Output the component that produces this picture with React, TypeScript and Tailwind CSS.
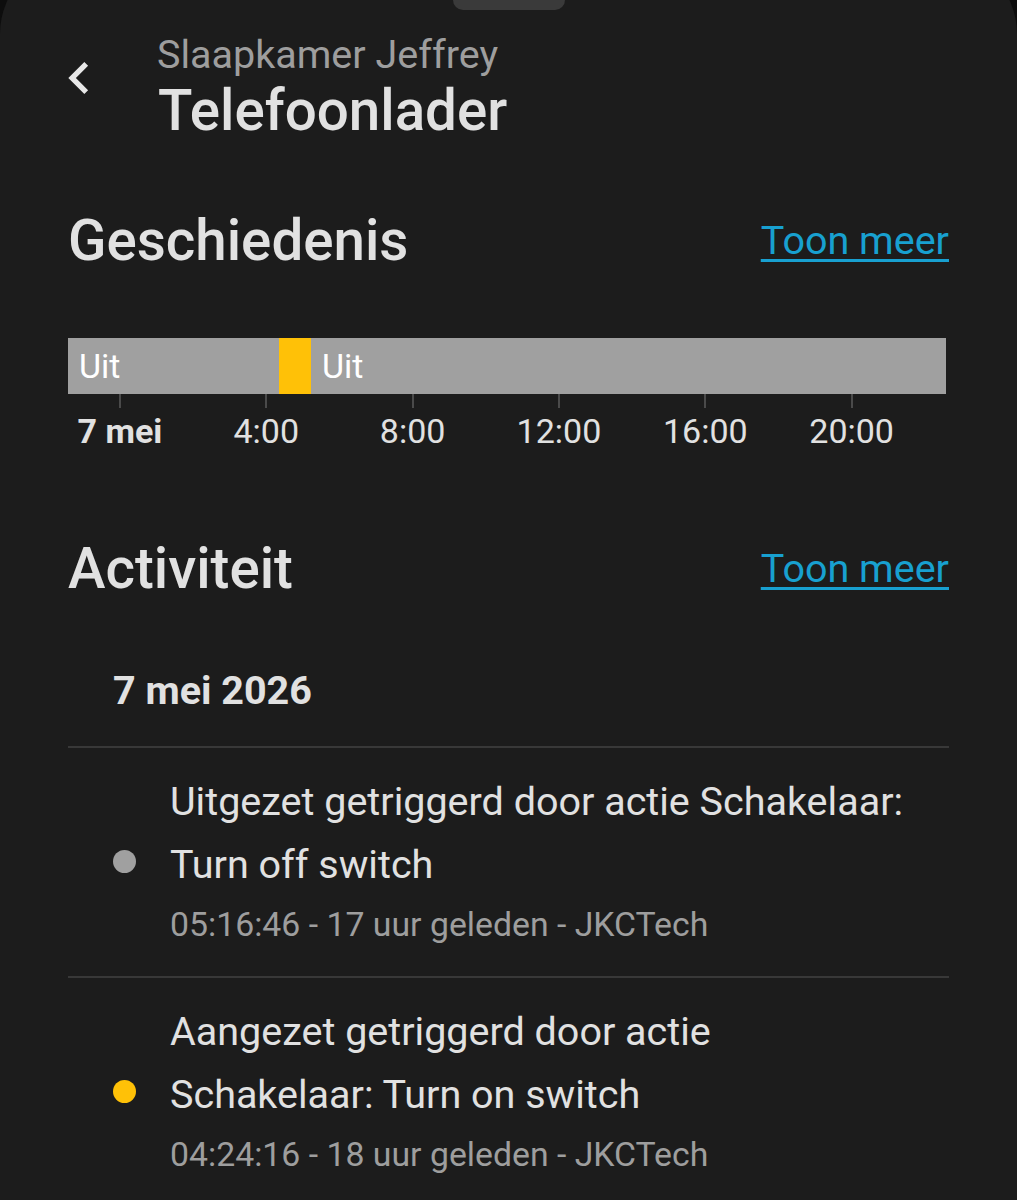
import React from 'react';

type Segment = { label: string; hours: number; on: boolean };

// timeline starts at 22:35 the day before, 24h window
const START_OFFSET = 1.42;
const TOTAL = 24;

const segments: Segment[] = [
  { label: 'Uit', hours: 5.77, on: false },
  { label: '', hours: 0.87, on: true },
  { label: 'Uit', hours: 17.36, on: false },
];

const ticks = [
  { label: '7 mei', bold: true },
  { label: '4:00' },
  { label: '8:00' },
  { label: '12:00' },
  { label: '16:00' },
  { label: '20:00' },
];

type Entry = { lines: string[]; meta: string; on: boolean };

const entries: Entry[] = [
  {
    lines: ['Uitgezet getriggerd door actie Schakelaar:', 'Turn off switch'],
    meta: '05:16:46 - 17 uur geleden - JKCTech',
    on: false,
  },
  {
    lines: ['Aangezet getriggerd door actie', 'Schakelaar: Turn on switch'],
    meta: '04:24:16 - 18 uur geleden - JKCTech',
    on: true,
  },
];

const SectionHeader = ({ title }: { title: string }) => (
  <div className="flex items-center justify-between">
    <h2 className="text-[56.5px] leading-[64px] font-medium text-[#e1e1e1]">{title}</h2>
    <a href="#" className="text-[39.5px] leading-[48px] text-[#18a0d0] underline decoration-[3px] underline-offset-[5px]">
      Toon meer
    </a>
  </div>
);

export default function App() {
  return (
    <div className="min-h-[1200px] overflow-hidden bg-[#0d0d0d] font-['Roboto',sans-serif]">
      <div className="-mt-[46px] min-h-[1246px] rounded-t-[80px] bg-[#1c1c1c] pt-[46px]">
        <div className="mx-auto h-[10px] w-[112px] rounded-b-full bg-[#3a3a3a]" />

        {/* header */}
        <div className="mt-[21px] flex pl-[47px]">
          <button className="mt-[15px] mr-[46px] h-[64px] w-[64px] shrink-0">
            <svg viewBox="0 0 24 24" className="h-[64px] w-[64px]" fill="#e8e8e8">
              <path d="M15.41,16.58L10.83,12L15.41,7.41L14,6L8,12L14,18L15.41,16.58Z" />
            </svg>
          </button>
          <div>
            <div className="text-[39.5px] leading-[48px] text-[#9e9e9e]">Slaapkamer Jeffrey</div>
            <h1 className="ml-[1px] text-[56.5px] leading-[64px] font-medium text-[#e1e1e1]">Telefoonlader</h1>
          </div>
        </div>

        <div className="px-[68px]">
          <div className="mt-[66px]">
            <SectionHeader title="Geschiedenis" />
          </div>

          {/* timeline */}
          <div className="mt-[65px] w-[878px]">
            <div className="flex h-[56px]">
              {segments.map((s, i) => (
                <div
                  key={i}
                  className={`flex items-center overflow-hidden pl-[11px] text-[34px] text-white ${s.on ? 'bg-[#ffc107]' : 'bg-[#a0a0a0]'}`}
                  style={{ width: `${(s.hours / TOTAL) * 100}%` }}
                >
                  {s.label}
                </div>
              ))}
            </div>
            <div className="relative h-[58px]">
              {ticks.map((t, i) => {
                const left = `${((START_OFFSET + i * 4) / TOTAL) * 100}%`;
                return (
                  <React.Fragment key={t.label}>
                    <div className="absolute top-0 h-[14px] w-[2px] -translate-x-1/2 bg-[#4a4a4a]" style={{ left }} />
                    <div
                      className={`absolute top-[17px] -translate-x-1/2 text-[34px] leading-[40px] whitespace-nowrap text-[#e1e1e1] ${t.bold ? 'font-bold' : ''}`}
                      style={{ left }}
                    >
                      {t.label}
                    </div>
                  </React.Fragment>
                );
              })}
            </div>
          </div>

          <div className="mt-[85px]">
            <SectionHeader title="Activiteit" />
          </div>

          <div className="mt-[66px] pl-[45px] text-[39.5px] leading-[48px] font-bold text-[#e1e1e1]">7 mei 2026</div>

          <div className="mt-[31px]">
            {entries.map((e, i) => (
              <div key={i} className="border-t-2 border-[#383838]">
                <div className="flex items-center pt-[22px] pb-[23px] pl-[45px]">
                  <div className={`h-[23px] w-[23px] shrink-0 rounded-full ${e.on ? 'bg-[#ffc107]' : 'bg-[#a0a0a0]'}`} />
                  <div className="ml-[34px] max-w-[760px]">
                    {e.lines.map((l) => (
                      <div key={l} className="text-[39.5px] leading-[63px] text-[#e1e1e1]">{l}</div>
                    ))}
                    <div className="text-[33.8px] leading-[57px] text-[#9e9e9e]">{e.meta}</div>
                  </div>
                </div>
              </div>
            ))}
          </div>
        </div>
      </div>
    </div>
  );
}
